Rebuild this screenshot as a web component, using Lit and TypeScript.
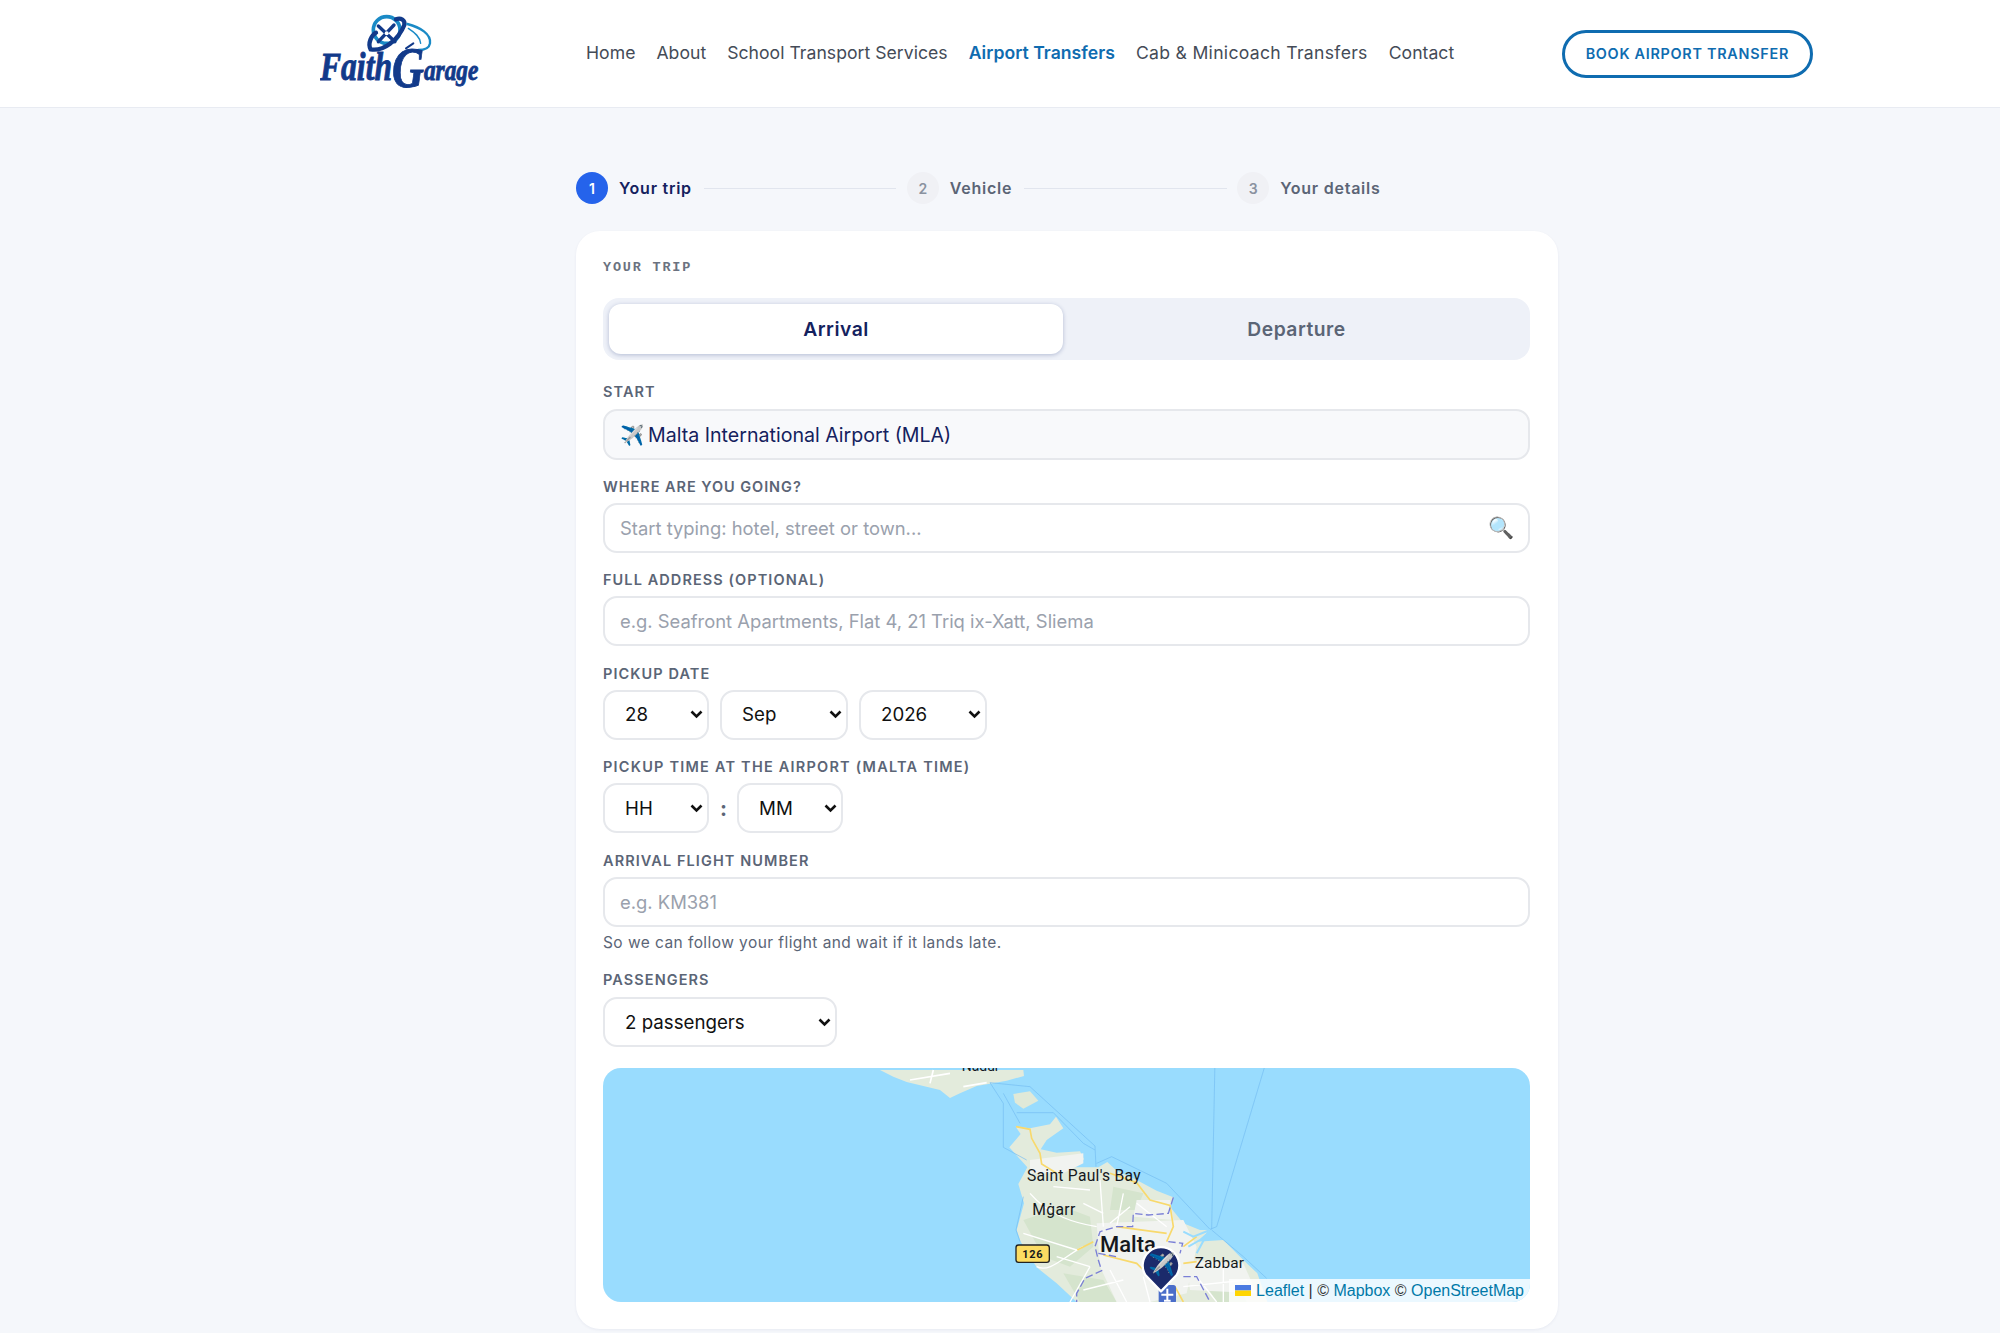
import { LitElement, html, css, svg } from "lit";
import { customElement } from "lit/decorators.js";

const mapArt = svg`
  <rect width="927" height="234" fill="#99dcfe"/>
  <g transform="translate(247,-8) scale(.33333)">
    <path d="M90 30 L520 30 L522 48 L470 62 L415 72 L380 78 L330 100 L300 114 L270 90 L170 66 L130 50 Z" fill="#e3ebdc"/>
    <path d="M250 30 L240 70 M180 60 L300 40 M340 80 L410 68" fill="none" stroke="#fff" stroke-width="5"/>
    <path d="M490 102 L540 94 L565 122 L520 146 L495 128 Z" fill="#e0e9d8"/>
    <path d="M497 200 L540 205 L600 193 L618 170 L640 205 L590 240 L572 268 L620 278 L690 274 L702 298 L660 322 L745 322 L772 306 L800 332 L860 360 L920 392 L970 412 L960 440 L1000 490 L1050 510 L1080 510 L1040 545 L1120 540 L1180 600 L1222 640 L1252 726 L680 726 L620 670 L560 622 L512 545 L500 510 L522 430 L505 372 L532 322 L478 262 L512 222 Z" fill="#e3ebdc"/>
    <path d="M520 480 L640 440 L720 470 L730 560 L660 620 L580 590 Z M790 380 L880 400 L860 450 L780 450 Z M640 640 L760 660 L800 726 L690 726 Z M1060 660 L1150 640 L1190 726 L1100 726 Z" fill="#d5e4cd"/>
    <path d="M540 300 L700 280 L700 310 L640 340 L540 340 Z M740 490 L1000 480 L1040 560 L1010 700 L900 726 L800 726 L750 620 Z M1010 600 L1180 610 L1220 700 L1020 690 Z M860 420 L960 420 L970 480 L850 470 Z" fill="#f1f3f0"/>
    <path d="M540 400 C600 470 680 490 740 500 M700 560 C640 590 600 640 560 620 M750 360 L760 500 M820 400 L800 500 M610 380 L720 390 M720 620 L660 726 M780 630 L830 726 M820 660 L700 690 M520 520 L680 570 M860 430 L950 500 M1040 650 L1100 726 M1120 610 L1120 726 M700 430 L760 460 M840 440 L780 490 M620 590 L720 620 M880 650 L900 726 M1000 680 L1190 660" fill="none" stroke="#fff" stroke-width="4"/>
    <path d="M498 200 L540 208 L545 235 L570 280 L575 312 L620 340 M780 340 L860 368 L900 420 L960 436 L970 500 L950 545 M800 500 L950 520 M682 570 L730 545 M760 585 L860 610 L880 630 M1000 610 L1040 605 M1000 560 L1040 530 M975 680 L1000 726" fill="none" stroke="#f8d96c" stroke-width="5"/>
    <path d="M970 412 L955 460 L895 465 L850 460 L848 500 L800 500 L750 515 L735 560 L745 600 L755 632 L705 655 L680 700 L680 726 M745 580 L800 590 M955 545 L998 550 L990 580 M1000 650 L1040 650 L1080 726" fill="none" stroke="#7a7fd6" stroke-width="4" stroke-dasharray="22 10"/>
    <path d="M420 68 L540 80 L735 258 L738 320 M420 68 L460 130 L460 262 L530 300 M460 100 L510 190 M500 158 L610 158 L700 250 L735 270 M740 310 L785 290 L950 370 L1080 508 L1100 500 L1250 0 M1085 508 L1095 0 M1085 510 L1180 590 L1250 655 M520 410 L498 510 L510 545" fill="none" stroke="#74bcf1" stroke-width="2"/>
    <path d="M1080 510 L1030 530 L1000 515 M1075 515 L1040 580 M1050 540 L1015 560" fill="none" stroke="#99dcfe" stroke-width="6"/>
    <g class="place">
      <text x="335" y="34" font-size="42">Nadur</text>
      <text x="531" y="362" font-size="47" letter-spacing=".8">Saint Paul's Bay</text>
      <text x="547" y="466" font-size="47" letter-spacing="1">Mġarr</text>
      <text x="1034" y="624" font-size="46" letter-spacing=".6">Zabbar</text>
      <text x="750" y="576" font-size="66" font-weight="500">Malta</text>
    </g>
    <rect x="498" y="555" width="100" height="52" rx="8" fill="#fcdc62" stroke="#222" stroke-width="4"/>
    <text class="place" x="548" y="593" font-size="33" font-weight="700" text-anchor="middle" letter-spacing="2">126</text>
    <rect x="926" y="675" width="52" height="55" rx="8" fill="#4a6dc9"/>
    <path d="M952 686 V720 M934 704 H970 M942 722 H962" stroke="#fff" stroke-width="6" fill="none"/>
    <path d="M933 694 L886 645 A55 55 0 1 1 980 645 Z" fill="#1b2a6b" stroke="#fff" stroke-width="7" stroke-linejoin="round"/>
    <text x="935" y="637" font-size="66" text-anchor="middle" font-family="'Noto Color Emoji', sans-serif">✈️</text>
  </g>
`;

@customElement("app-root")
export class AppRoot extends LitElement {
  static styles = css`
    :host { display: block; min-height: 1333px; background: #f5f7fb; font-family: Inter, "Liberation Sans", sans-serif; overflow: hidden; }
    * { box-sizing: border-box; }
    .hdr { height: 108px; background: #fff; border-bottom: 1px solid #e8ebf2; display: flex; align-items: center; padding: 0 187px 0 320px; }
    .logo { width: 160px; height: 94px; flex: none; display: block; }
    .logo text { font-family: "Liberation Serif", serif; font-weight: 700; font-style: italic; fill: #123a8a; stroke: #123a8a; stroke-width: .9px; }
    nav { display: flex; gap: 21px; margin-left: 106px; position: relative; top: -1px; }
    nav a { font-size: 17.6px; letter-spacing: .03px; color: #444b57; text-decoration: none; white-space: nowrap; }
    nav a.wide { letter-spacing: .3px; }
    nav a.on { color: #0f6cb0; font-weight: 600; }
    .cta { margin-left: auto; height: 48px; border: 3px solid #0f6cb0; border-radius: 24px; padding: 0 21px; display: flex; align-items: center; color: #0f6cb0; font-size: 14.4px; font-weight: 600; letter-spacing: .72px; white-space: nowrap; }
    main { width: 982px; margin: 0 0 0 576px; padding-top: 64px; }
    .steps { display: flex; align-items: center; height: 32px; margin-bottom: 27px; font-size: 16px; font-weight: 600; }
    .num { width: 32px; height: 32px; border-radius: 50%; background: #f0f1f5; color: #8a92a0; display: flex; align-items: center; justify-content: center; font-size: 14px; letter-spacing: 0; flex: none; }
    .step { display: flex; align-items: center; gap: 11px; color: #5b6576; white-space: nowrap; letter-spacing: .75px; }
    .step.on { color: #14215e; }
    .step.on .num { background: #2563eb; color: #fff; }
    .ln { height: 1px; background: #e1e5ee; flex: none; }
    .l1 { width: 192px; margin: 0 11px 0 12px; }
    .l2 { width: 203px; margin: 0 10px 0 12px; }
    .card { background: #fff; border-radius: 24px; padding: 27px 28px 27px 27px; box-shadow: 0 1px 3px rgba(20,33,94,.06); height: 1098px; }
    .eyebrow { font-family: "Liberation Mono", monospace; font-weight: 700; font-size: 13.5px; letter-spacing: 1.8px; color: #6b7280; line-height: 20px; margin-bottom: 20px; }
    .tabs { display: flex; height: 62px; background: #eef1f8; border-radius: 16px; padding: 6px 0 6px 6px; margin-bottom: 23px; }
    .tab { flex: 1 1 0; display: flex; align-items: center; justify-content: center; font-size: 19.3px; font-weight: 600; color: #5b6576; border-radius: 12px; letter-spacing: .5px; }
    .tab.on { flex: 0 0 454px; background: #fff; color: #14215e; box-shadow: 0 1px 4px rgba(30,50,120,.28); }
    .f { margin-bottom: 18.5px; }
    .first { margin-bottom: 17.5px; }
    label { display: block; font-size: 14.5px; font-weight: 600; line-height: 18px; letter-spacing: 1.08px; color: #5b6576; margin-bottom: 7px; text-transform: uppercase; white-space: nowrap; }
    .first label, label.roomy { margin-bottom: 8px; }
    label.tight { letter-spacing: .95px; }
    label.long { letter-spacing: 1.22px; }
    .inp { display: block; width: 100%; height: 50px; border: 2px solid #e6e8ec; border-radius: 14px; padding: 0 15px; font: 400 18.4px Inter, sans-serif; color: #14215e; background: #fff; outline: none; }
    .inp::placeholder { color: #9aa1ad; opacity: 1; }
    .ro { height: 51px; background: #f8f9fb; display: flex; align-items: center; font-size: 19.6px; gap: 4px; }
    .wrap { position: relative; }
    .mag { position: absolute; right: 16px; top: 12px; font-size: 21px; line-height: 26px; }
    .row { display: flex; align-items: center; gap: 11px; }
    select { height: 50px; appearance: none; -webkit-appearance: none; border: 2px solid #e6e8ec; border-radius: 14px; padding: 0 0 0 20px; font: 400 18.7px Inter, sans-serif; color: #111; outline: none;
      background: #fff url("data:image/svg+xml,%3Csvg xmlns='http://www.w3.org/2000/svg' width='13' height='9' viewBox='0 0 13 9'%3E%3Cpath d='M1.5 1.5 6.5 6.5l5-5' fill='none' stroke='%23111' stroke-width='2.6'/%3E%3C/svg%3E") no-repeat right 4px center; }
    .w106 { width: 106px; } .w127 { width: 128px; } .w234 { width: 234px; }
    .colon { font-size: 21px; font-weight: 700; color: #5b6576; width: 6px; text-align: center; }
    .help { font-size: 15.5px; color: #5b6576; line-height: 20px; margin-top: 6px; letter-spacing: .43px; }
    .map { position: relative; height: 234px; border-radius: 18px; overflow: hidden; margin-top: 21px; }
    .map svg { display: block; }
    .place { font-family: Roboto, "Open Sans", sans-serif; fill: #15181c; }
    .attr { position: absolute; right: 0; bottom: 0; height: 23px; background: rgba(255,255,255,.8); padding: 0 6px; display: flex; align-items: center; gap: 5px; font: 16px "Liberation Sans", Arial, sans-serif; color: #333; white-space: nowrap; }
    .attr a { color: #0078a8; text-decoration: none; }
    .flag { width: 16px; height: 11px; display: block; }
  `;

  render() {
    return html`
      <header class="hdr">
        <svg class="logo" viewBox="0 0 160 94" role="img" aria-label="Faith Garage logo">
          <g transform="translate(40,3) scale(.33333)" fill="none" stroke-linecap="round">
            <circle cx="80" cy="60" r="40" stroke="#1a8ac6" stroke-width="11"/>
            <path d="M32 118 C22 100 35 75 48 68 M32 118 C70 125 115 90 133 45 C136 30 122 22 108 28" stroke="#123a8a" stroke-width="13"/>
            <path d="M55 48 L105 95 M102 45 L55 95" stroke="#123a8a" stroke-width="10"/>
            <circle cx="80" cy="70" r="6" fill="#fff"/>
            <path d="M142 42 C180 52 214 72 210 100 C208 112 195 120 175 120" stroke="#1a8ac6" stroke-width="7"/>
            <path d="M145 55 C165 68 180 80 182 100" stroke="#1a8ac6" stroke-width="4"/>
            <path d="M138 115 L160 100" stroke="#123a8a" stroke-width="6"/>
          </g>
          <text transform="translate(0,73) scale(.79,1)" font-size="40">Faith<tspan font-size="56" dy="7">G</tspan><tspan font-size="29.5" dy="-7">arage</tspan></text>
        </svg>
        <nav>
          <a href="#">Home</a><a href="#">About</a><a href="#">School Transport Services</a>
          <a href="#" class="on">Airport Transfers</a><a href="#" class="wide">Cab &amp; Minicoach Transfers</a><a href="#">Contact</a>
        </nav>
        <div class="cta">BOOK AIRPORT TRANSFER</div>
      </header>
      <main>
        <div class="steps">
          <div class="step on"><span class="num">1</span>Your trip</div>
          <div class="ln l1"></div>
          <div class="step"><span class="num">2</span>Vehicle</div>
          <div class="ln l2"></div>
          <div class="step"><span class="num">3</span>Your details</div>
        </div>
        <section class="card">
          <div class="eyebrow">YOUR TRIP</div>
          <div class="tabs"><div class="tab on">Arrival</div><div class="tab">Departure</div></div>
          <div class="f first"><label>Start</label><div class="inp ro"><span>✈️</span><span>Malta International Airport (MLA)</span></div></div>
          <div class="f"><label class="tight">Where are you going?</label><div class="wrap"><input class="inp" placeholder="Start typing: hotel, street or town..."/><span class="mag">🔍</span></div></div>
          <div class="f"><label>Full address (optional)</label><input class="inp" placeholder="e.g. Seafront Apartments, Flat 4, 21 Triq ix-Xatt, Sliema"/></div>
          <div class="f"><label>Pickup date</label><div class="row">
            <select class="w106"><option>28</option></select>
            <select class="w127"><option>Sep</option></select>
            <select class="w127"><option>2026</option></select>
          </div></div>
          <div class="f"><label class="long">Pickup time at the airport (Malta time)</label><div class="row">
            <select class="w106"><option>HH</option></select><span class="colon">:</span>
            <select class="w106"><option>MM</option></select>
          </div></div>
          <div class="f"><label>Arrival flight number</label><input class="inp" placeholder="e.g. KM381"/><div class="help">So we can follow your flight and wait if it lands late.</div></div>
          <div><label class="roomy">Passengers</label><select class="w234"><option>2 passengers</option></select></div>
          <div class="map">
            <svg width="927" height="234" viewBox="0 0 927 234" role="img" aria-label="Map of Malta">${mapArt}</svg>
            <div class="attr">
              <svg class="flag" viewBox="0 0 16 11"><rect width="16" height="5.5" fill="#4c7be1"/><rect y="5.5" width="16" height="5.5" fill="#ffd500"/></svg>
              <span><a href="#">Leaflet</a> | © <a href="#">Mapbox</a> © <a href="#">OpenStreetMap</a></span>
            </div>
          </div>
        </section>
      </main>
    `;
  }
}
